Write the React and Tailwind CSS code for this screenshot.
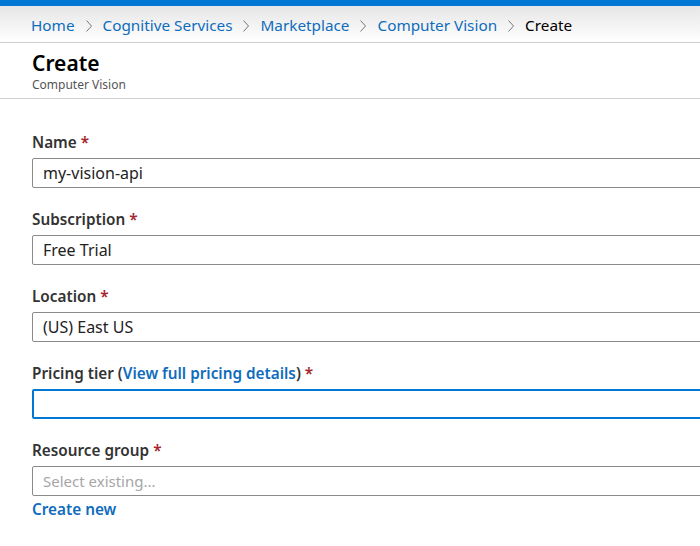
import React from 'react';

const font = { fontFamily: '"Noto Sans", "Open Sans", sans-serif' };

const crumbs = ['Home', 'Cognitive Services', 'Marketplace', 'Computer Vision'];

const Chevron = () => (
    <svg width="8" height="14" viewBox="0 0 8 14" className="mx-[10px] shrink-0">
        <path d="M1.5 1.5 L6.5 7 L1.5 12.5" fill="none" stroke="#777" strokeWidth="1" />
    </svg>
);

const Label = ({ children }) => (
    <div className="text-[15.3px] font-semibold text-[#333] leading-[22px] mb-[5px]">
        {children} <span className="text-[#a4262c]">*</span>
    </div>
);

const Field = ({ label, children, value, focused }) => (
    <div className="mb-[20px]">
        <Label>{label || children}</Label>
        <div
            className={
                'h-[30px] -mr-[10px] rounded-[2px] flex items-center px-[10px] text-[16px] ' +
                (focused ? 'border-2 border-[#0078d4]' : 'border border-[#8a8a8a]')
            }
        >
            {value && <span className="text-[#222]">{value}</span>}
        </div>
    </div>
);

export default function App() {
    return (
        <div className="w-[700px] h-[546px] bg-white overflow-hidden" style={font}>
            <div className="h-[6px] bg-[#0078d4]" />
            <div className="h-[37px] bg-gradient-to-b from-[#e6e6e6] to-white border-b border-[#cfcfcf] flex items-center pl-[31px] pt-[3px] text-[15.3px]">
                {crumbs.map((c) => (
                    <React.Fragment key={c}>
                        <span className="text-[#0f6cbd]">{c}</span>
                        <Chevron />
                    </React.Fragment>
                ))}
                <span className="text-black">Create</span>
            </div>
            <div className="h-[56px] border-b border-[#d0d0d0] pl-[32px] pt-[6px]">
                <div className="text-[21px] font-semibold text-black leading-[28px]">Create</div>
                <div className="text-[12px] text-[#555] leading-[16px]">Computer Vision</div>
            </div>
            <div className="pl-[32px] pt-[32px]">
                <Field label="Name" value="my-vision-api" />
                <Field label="Subscription" value="Free Trial" />
                <Field label="Location" value="(US) East US" />
                <Field focused>
                    Pricing tier (<span className="text-[#0f6cbd]">View full pricing details</span>)
                </Field>
                <div>
                    <Label>Resource group</Label>
                    <div className="h-[30px] -mr-[10px] rounded-[2px] flex items-center px-[10px] text-[15px] border border-[#8a8a8a]">
                        <span className="text-[#a6a6a6]">Select existing...</span>
                    </div>
                    <div className="text-[15.3px] font-semibold text-[#0f6cbd] leading-[26px]">Create new</div>
                </div>
            </div>
        </div>
    );
}
